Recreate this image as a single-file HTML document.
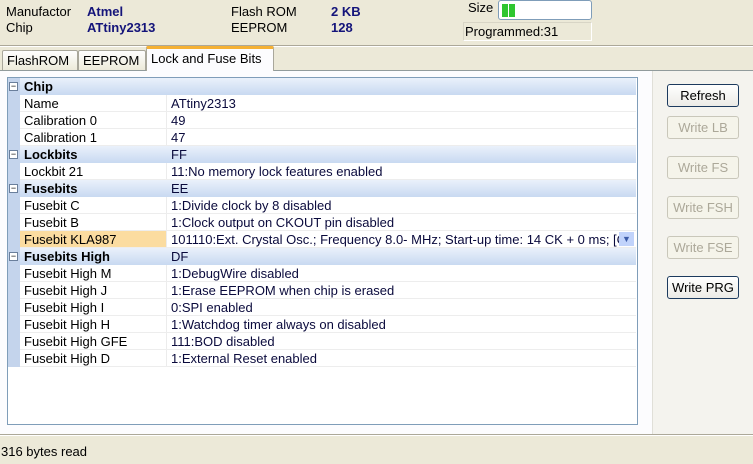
<!DOCTYPE html>
<html><head><style>
*{margin:0;padding:0;box-sizing:border-box}
body{width:753px;height:464px;background:#ece9d8;font-family:"Liberation Sans",sans-serif;font-size:13px;color:#000;position:relative;overflow:hidden}
.a{position:absolute;white-space:nowrap}
.b{color:#14147a;font-weight:bold}
.tab{position:absolute;top:50px;height:21px;border:1px solid #a9a79b;border-bottom:none;background:linear-gradient(#fefefe,#ece9d8);padding:2px 4px;border-radius:2px 2px 0 0}
.btn{position:absolute;left:667px;width:72px;height:23px;border:1px solid #1c3a5e;border-radius:3px;background:linear-gradient(#fff,#ecebe6);text-align:center;line-height:21px}
.dis{border-color:#c9c7ba;color:#aca899;background:#f5f4ea}
.row{position:absolute;left:20px;width:616px;height:17px;border-bottom:1px solid #ededed;background:#fff}
.row span{position:absolute;top:1px}
.row .n{left:4px}.row .v{left:151px;color:#0a0a3c}
.row .sep{position:absolute;left:146px;top:0;width:1px;height:16px;background:#ececec}
.h{background:linear-gradient(#eaf1fb,#c8d9f1);border-bottom:none}
.h .n{font-weight:bold;left:4px}
.pm{position:absolute;left:-11px;top:4px;width:9px;height:9px;border:1px solid #6a7f9c;background:#fff;font-size:9px;line-height:6px;text-align:center}
</style></head><body>
<div class="a" style="left:6px;top:4px">Manufactor</div>
<div class="a" style="left:6px;top:20px">Chip</div>
<div class="a b" style="left:87px;top:4px">Atmel</div>
<div class="a b" style="left:87px;top:20px">ATtiny2313</div>
<div class="a" style="left:231px;top:4px">Flash ROM</div>
<div class="a" style="left:231px;top:20px">EEPROM</div>
<div class="a b" style="left:331px;top:4px">2 KB</div>
<div class="a b" style="left:331px;top:20px">128</div>
<div class="a" style="left:468px;top:0px">Size</div>
<div class="a" style="left:498px;top:0;width:94px;height:20px;border:1px solid #7f9db9;border-radius:3px;background:#fff"><div style="position:absolute;left:3px;top:3px;width:6px;height:13px;background:#2fc62f"></div><div style="position:absolute;left:10px;top:3px;width:6px;height:13px;background:#2fc62f"></div></div>
<div class="a" style="left:463px;top:22px;width:129px;height:19px;border:1px solid #fff;border-top-color:#d8d5c6;border-left-color:#d8d5c6;padding-left:1px;line-height:17px">Programmed:31</div>
<div class="a" style="left:0;top:45px;width:753px;height:1px;background:#aca899"></div>
<div class="a" style="left:0;top:46px;width:753px;height:1px;background:#fff"></div>
<div class="tab" style="left:2px;width:76px">FlashROM</div>
<div class="tab" style="left:78px;width:68px">EEPROM</div>
<div class="a" style="left:0;top:70px;width:753px;height:364px;background:#fcfcfe;border-top:1px solid #919b9c"></div>
<div class="tab" style="left:146px;top:46px;height:25px;width:128px;background:#fcfcfe;border-top:3px solid #f5b134;padding-top:2px;z-index:2">Lock and Fuse Bits</div>
<div class="a" style="left:652px;top:71px;width:101px;height:363px;background:#f4f3ee;border-left:1px solid #e0dfd8"></div>
<div class="a" style="left:0;top:434px;width:753px;height:1px;background:#aca899"></div>
<div class="a" style="left:0;top:435px;width:753px;height:1px;background:#fff"></div>
<div class="a" style="left:7px;top:77px;width:631px;height:348px;border:1px solid #7f9db9;background:#fff">
<div style="position:absolute;left:0;top:0;width:12px;height:289px;background:#c4d4ec"></div>
</div>
<div class="a" style="left:0;top:78px">
<div class="row h" style="top:0"><div class="pm">−</div><span class="n">Chip</span></div>
<div class="row" style="top:17px"><span class="n">Name</span><div class="sep"></div><span class="v">ATtiny2313</span></div>
<div class="row" style="top:34px"><span class="n">Calibration 0</span><div class="sep"></div><span class="v">49</span></div>
<div class="row" style="top:51px"><span class="n">Calibration 1</span><div class="sep"></div><span class="v">47</span></div>
<div class="row h" style="top:68px"><div class="pm">−</div><span class="n">Lockbits</span><span class="v">FF</span></div>
<div class="row" style="top:85px"><span class="n">Lockbit 21</span><div class="sep"></div><span class="v">11:No memory lock features enabled</span></div>
<div class="row h" style="top:102px"><div class="pm">−</div><span class="n">Fusebits</span><span class="v">EE</span></div>
<div class="row" style="top:119px"><span class="n">Fusebit C</span><div class="sep"></div><span class="v">1:Divide clock by 8 disabled</span></div>
<div class="row" style="top:136px"><span class="n">Fusebit B</span><div class="sep"></div><span class="v">1:Clock output on CKOUT pin disabled</span></div>
<div class="row" style="top:153px"><div style="position:absolute;left:0;top:0;width:146px;height:16px;background:#fbdca0"></div><span class="n">Fusebit KLA987</span><div class="sep"></div><span class="v" style="width:450px;overflow:hidden">101110:Ext. Crystal Osc.; Frequency 8.0- MHz; Start-up time: 14 CK + 0 ms; [CKSEL=1110 SUT=10]</span><div style="position:absolute;left:599px;top:1px;width:15px;height:14px;background:#c1d3fb;color:#3d5ca8;font-size:9px;text-align:center;line-height:14px">▼</div></div>
<div class="row h" style="top:170px"><div class="pm">−</div><span class="n">Fusebits High</span><span class="v">DF</span></div>
<div class="row" style="top:187px"><span class="n">Fusebit High M</span><div class="sep"></div><span class="v">1:DebugWire disabled</span></div>
<div class="row" style="top:204px"><span class="n">Fusebit High J</span><div class="sep"></div><span class="v">1:Erase EEPROM when chip is erased</span></div>
<div class="row" style="top:221px"><span class="n">Fusebit High I</span><div class="sep"></div><span class="v">0:SPI enabled</span></div>
<div class="row" style="top:238px"><span class="n">Fusebit High H</span><div class="sep"></div><span class="v">1:Watchdog timer always on disabled</span></div>
<div class="row" style="top:255px"><span class="n">Fusebit High GFE</span><div class="sep"></div><span class="v">111:BOD disabled</span></div>
<div class="row" style="top:272px"><span class="n">Fusebit High D</span><div class="sep"></div><span class="v">1:External Reset enabled</span></div>
</div>
<div class="btn" style="top:84px">Refresh</div>
<div class="btn dis" style="top:116px">Write LB</div>
<div class="btn dis" style="top:156px">Write FS</div>
<div class="btn dis" style="top:196px">Write FSH</div>
<div class="btn dis" style="top:236px">Write FSE</div>
<div class="btn" style="top:276px">Write PRG</div>
<div class="a" style="left:1px;top:444px">316 bytes read</div>
</body></html>
